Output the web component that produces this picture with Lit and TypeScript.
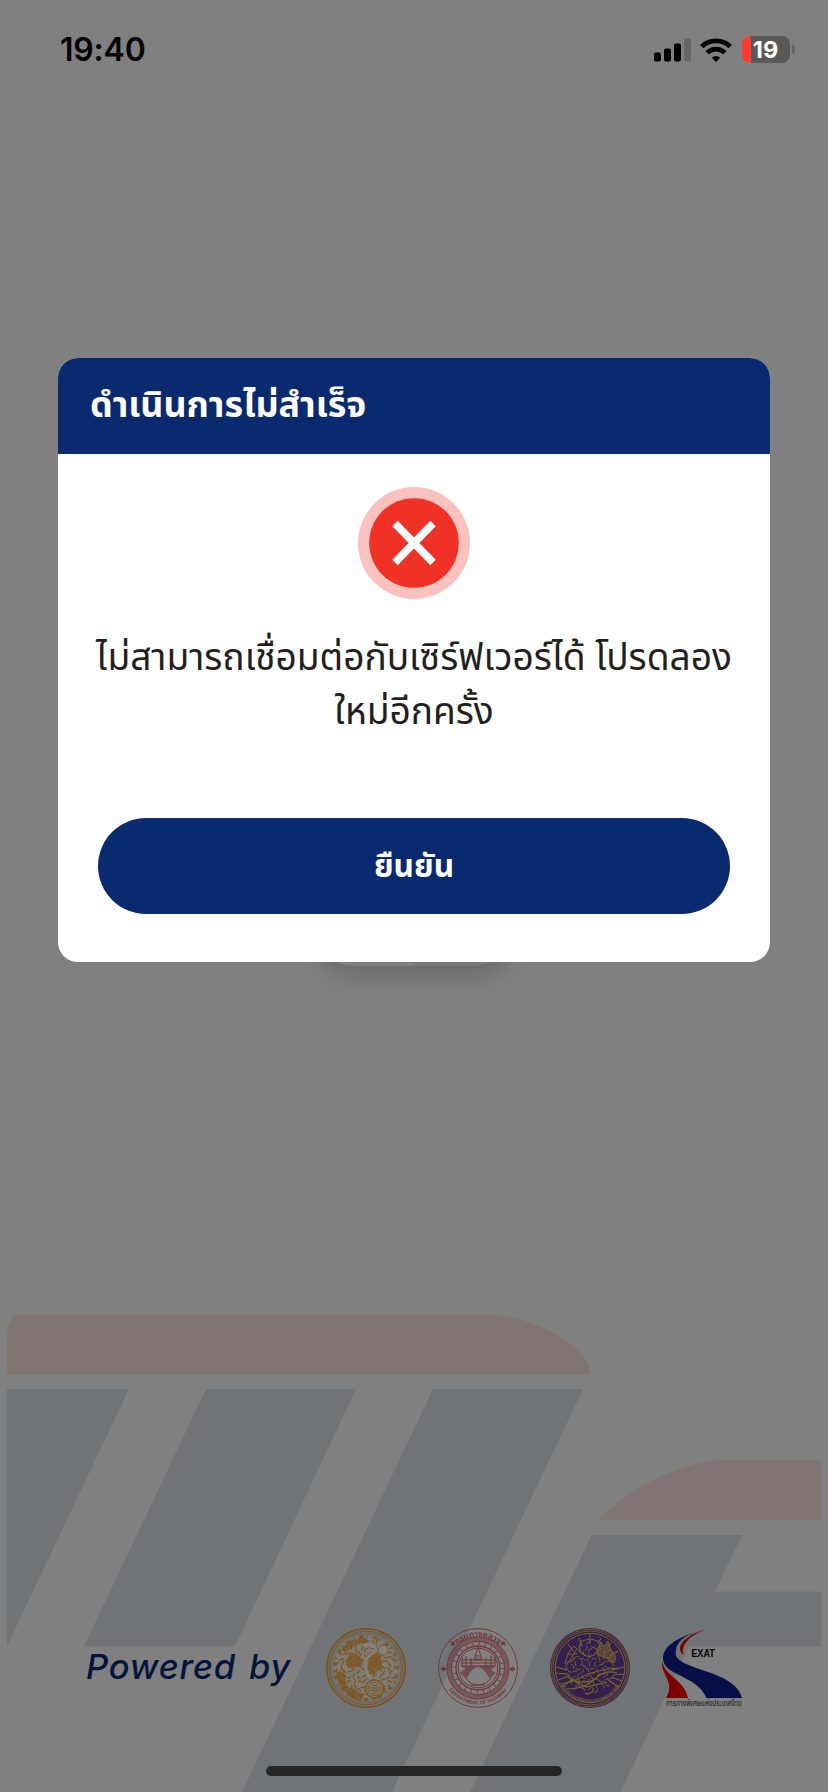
import { html, css, svg, LitElement } from 'lit'
import { customElement, property } from 'lit/decorators.js'

// small deterministic strokes filling the inside of an engraved seal
const engraving = (count: number, radius: number, size: number) => {
  let d = ''
  for (let i = 0; i < count; i++) {
    const a = i * 2.39996
    const r = radius * Math.sqrt((i + 0.5) / count)
    const x = 40 + r * Math.cos(a)
    const y = 40 + r * Math.sin(a)
    const t = a * 1.7
    const dx = size * Math.cos(t)
    const dy = size * Math.sin(t)
    d += `M${(x - dx).toFixed(1)} ${(y - dy).toFixed(1)}q${(dx - dy).toFixed(1)} ${(dy + dx).toFixed(1)} ${(2 * dx).toFixed(1)} ${(2 * dy).toFixed(1)}`
  }
  return d
}

@customElement('status-bar')
export class StatusBar extends LitElement {
  @property() time = '19:40'
  @property() level = '19'

  render() {
    return html`
      <span class="time">${this.time}</span>
      <span class="icons">
        <svg class="signal" width="37" height="24" viewBox="0 0 37 24">
          <rect x="0" y="14.5" width="7" height="9" rx="2" />
          <rect x="10" y="10.5" width="7" height="13" rx="2" />
          <rect x="20" y="5.5" width="7" height="18" rx="2" />
          <rect x="30" y="0.5" width="7" height="23" rx="2" fill="#666" />
        </svg>
        <svg class="wifi" width="32" height="24" viewBox="0 0 32 24" fill="none" stroke="#000" stroke-width="4.8">
          <path d="M1.8 8.6a20.4 20.4 0 0 1 28.4 0" />
          <path d="M7.2 14.7a12.6 12.6 0 0 1 17.6 0" />
          <path d="M16 24l-4.2-4.3a6.2 6.2 0 0 1 8.4 0z" fill="#000" stroke="none" />
        </svg>
        <span class="battery">${this.level}</span>
        <span class="nub"></span>
      </span>
    `
  }

  static styles = css`
    :host {
      display: flex;
      justify-content: space-between;
      align-items: center;
      height: 99px;
      padding: 0 33px 0 60px;
      box-sizing: border-box;
      font-family: Inter, sans-serif;
    }
    .time {
      font-size: 32px;
      font-weight: 600;
      color: #000;
      letter-spacing: -0.2px;
    }
    .icons {
      display: flex;
      align-items: center;
    }
    .wifi {
      margin: 0 10px 0 9px;
    }
    .battery {
      display: grid;
      place-items: center;
      width: 48px;
      height: 27px;
      padding-right: 1px;
      box-sizing: border-box;
      border-radius: 8px;
      background: linear-gradient(90deg, #ff3b30 9px, #595959 9px);
      color: #fff;
      font-size: 23.5px;
      font-weight: 700;
      line-height: 27px;
    }
    .nub {
      width: 3px;
      height: 9px;
      margin-left: 2px;
      border-radius: 0 4px 4px 0;
      background: #626262;
    }
  `
}

@customElement('agency-seals')
export class AgencySeals extends LitElement {
  rural() {
    return svg`
      <g fill="none" stroke="#7c5113">
        <circle cx="40" cy="40" r="39.2" stroke-width="1.6" />
        <circle cx="40" cy="40" r="36.8" stroke-width=".9" />
        <circle cx="40" cy="40" r="35" stroke-width=".5" />
        <circle cx="40" cy="40" r="32" fill="#7e7a73" stroke="none" />
        <path d=${engraving(110, 31, 2.3)} stroke-width="1.1" />
        <path d="M15 22q10-12 24-12l4 4q-14 0-22 9zM10 45q9-5 9 6t10 10l8 7-3 5Q14 66 10 45M22 28q6-6 12 1t-3 10q-8 2-11-3M42 26q8-7 12 2l2 11-9 8q-7-5-6-12" fill="#7c5113" stroke-width=".6" opacity=".65" />
        <path d="M38 17q14 0 11 6l-9 8v13l5 8" stroke="#85827b" stroke-width="3" />
        <circle cx="57" cy="22" r="4.8" fill="#85827b" stroke-width=".8" />
        <circle cx="48.5" cy="61" r="9" fill="#7e7a73" stroke-width="1.3" />
        <circle cx="48.5" cy="61" r="6.5" stroke-width=".8" />
        <path d="M43 60h11M44 62.5h9M46 57.5h5M46 65h5" stroke-width="1.1" />
        <circle cx="40" cy="40" r="31.5" stroke-width="3" stroke-dasharray="1.5 5 4 3" opacity=".7" />
      </g>`
  }

  highways() {
    return svg`
      <defs>
        <path id="top" d="M8.5 40a31.5 31.5 0 0 1 63 0" />
        <path id="bottom" d="M3.5 40a36.5 36.5 0 0 0 73 0" />
      </defs>
      <g fill="none" stroke="#703a3d">
        <circle cx="40" cy="40" r="39.4" stroke-width="1" />
        <circle cx="40" cy="40" r="29" stroke-width="4.8" opacity=".55" />
        <circle cx="40" cy="40" r="31" stroke-width=".9" />
        <circle cx="40" cy="40" r="26.5" stroke-width="1" />
        <circle cx="40" cy="40" r="24" stroke-width="3.5" stroke-dasharray=".9 5.38" />
        <circle cx="40" cy="40" r="22" stroke-width="1.3" />
        <circle cx="40" cy="40" r="19.8" stroke-width="1" />
        <path d="M24 29v9h33v-9M24 32h33M24 35h33M28 28v10M33 30v8M48 30v8M53 28v10" stroke-width="1.1" />
        <path d="M36 32l4-13 4 13zM37 28h6M36 31h8" stroke-width="1" />
        <path d="M24 38h33l-5 4 5 3-5 5-5-7q-7-9-14 0l-5 7-6-5 6-4z" fill="#703a3d" opacity=".75" stroke-width=".8" />
        <path d="M28 50q4 7 12 7t13-7M33 57h14" stroke-width="1" />
        <path d="M3 41h5M5.5 38.5v5M72 41h5M74.500 38.5v5M13 14l4 3M16.5 13.5l-3 4M63 17l4-3M64 13.5l3 4" stroke-width="1.9" />
      </g>
      <g fill="#703a3d" font-weight="700" text-anchor="middle">
        <text font-size="8" font-family="Noto Sans Thai, Open Sans, sans-serif"><textPath href="#top" startOffset="50%">กรมทางหลวง</textPath></text>
        <text font-size="5" font-family="Liberation Sans, sans-serif"><textPath href="#bottom" startOffset="50%">DEPARTMENT OF HIGHWAY</textPath></text>
      </g>`
  }

  transport() {
    return svg`
      <circle cx="40" cy="40" r="40" fill="#342050" />
      <g fill="none" stroke="#7c6328">
        <circle cx="40" cy="40" r="38.7" stroke-width=".8" />
        <circle cx="40" cy="40" r="37" stroke-width=".8" />
        <circle cx="40" cy="40" r="34.8" stroke-width="1" />
        <path d=${engraving(75, 25, 2.5)} stroke-width=".95" />
        <path d="M29 10l3 8M40 6v9M51 10l-3 6M18 16l5 7M61 15l-5 6M68 23l-8 5M6 39l11 3M5 45l12 1M8 52l11-4M12 59l11-8M74 39l-11 3M75 46l-12 1M72 53l-11-4M68 59l-11-8" stroke-width="1.1" />
        <path d="M15 36q2-12 9-18l3 3q-5 7-8 14M34 27q-9-6-2-14 9-4 17 1M34 27q7 4 12-2" stroke-width="1" />
        <path d="M46 24l5-10 3 5 4-6 3 9q7 5 3 13l-8-5q-5-1-10-6" fill="#7c6328" fill-opacity=".5" stroke-width="1" />
        <path d="M10 56q13-2 24-8t34-8M17 61q18 0 28-10t22-6M35 66q10-1 8-6M25 54l12 5 20-5M18 49q14 10 29 1" stroke-width="1.1" />
      </g>
      <defs><path id="ring" d="M5.500 40a34.500 34.500 0 0 0 69 0" /></defs>
      <text fill="#80662b" font-size="5.5" font-weight="600" text-anchor="middle" font-family="Noto Sans Thai, Open Sans, sans-serif"><textPath href="#ring" startOffset="50%">สำนักงานปลัดกระทรวงคมนาคม</textPath></text>`
  }

  exat() {
    return svg`
      <path d="M47 .7C25 5 1 15 1 30.3 1 48 35 47 44.5 70H80C74 42 13.7 42 13.7 25.5 13.7 12 25 5 47 .7" fill="#060f47" />
      <path d="M42.5 1.7C25 7 12 17.5 21 26.7 19.5 15 28 8 42.5 1.7M.3 33.5C-2 46 14 54 4 70H26C22 51 3 49 .3 33.5" fill="#800000" />
      <text x="29.3" y="29.4" font-size="11.5" font-weight="700" font-family="Liberation Sans, sans-serif" textLength="23.5" lengthAdjust="spacingAndGlyphs">EXAT</text>
      <text x="4" y="78.4" font-size="8" font-family="Noto Sans Thai, Open Sans, sans-serif" textLength="76" lengthAdjust="spacingAndGlyphs" fill="#181818">การทางพิเศษแห่งประเทศไทย</text>`
  }

  render() {
    return html`
      <span class="label">Powered by</span>
      <div class="seals">
        <svg viewBox="0 0 80 80">${this.rural()}</svg>
        <svg viewBox="0 0 80 80">${this.highways()}</svg>
        <svg viewBox="0 0 80 80">${this.transport()}</svg>
        <svg viewBox="0 0 80 80">${this.exat()}</svg>
      </div>
    `
  }

  static styles = css`
    :host {
      display: flex;
      align-items: center;
      justify-content: space-between;
      padding: 0 86px 0 86px;
    }
    .label {
      padding-bottom: 3px;
      color: #04153d;
      font: italic 500 34.5px/44px Inter, sans-serif;
      letter-spacing: 0.8px;
      word-spacing: 3px;
      white-space: nowrap;
    }
    .seals {
      display: flex;
      gap: 32px;
    }
    svg {
      display: block;
      width: 80px;
      height: 80px;
      overflow: visible;
    }
  `
}

@customElement('error-dialog')
export class ErrorDialog extends LitElement {
  @property() heading = 'ดำเนินการไม่สำเร็จ'
  @property() action = 'ยืนยัน'
  @property({ attribute: false }) lines = ['ไม่สามารถเชื่อมต่อกับเซิร์ฟเวอร์ได้ โปรดลอง', 'ใหม่อีกครั้ง']

  render() {
    return html`
      <header><h1>${this.heading}</h1></header>
      <div class="content">
        <svg width="112" height="112" viewBox="0 0 112 112">
          <circle cx="56" cy="56" r="56" fill="#fac2bf" />
          <circle cx="56" cy="56" r="44.8" fill="#f03126" />
          <path d="M37 36.5l38 39M75 36.5l-38 39" stroke="#fff" stroke-width="7.6" />
        </svg>
        <div class="message">${this.lines.map((line) => html`<p>${line}</p>`)}</div>
        <button>${this.action}</button>
      </div>
    `
  }

  static styles = css`
    :host {
      display: block;
      overflow: hidden;
      border-radius: 20px;
      background: #fff;
      font-family: 'Noto Sans Thai', 'Open Sans', sans-serif;
    }
    header {
      display: flex;
      align-items: center;
      height: 96px;
      padding: 0 32px;
      background: #0a2a70;
    }
    h1 {
      margin: 0;
      color: #fff;
      font-size: 35.8px;
      font-weight: 700;
    }
    .content {
      display: flex;
      flex-direction: column;
      align-items: center;
      padding: 33px 40px 48px;
    }
    .message {
      margin: 33px 0 78px;
    }
    p {
      margin: 0;
      color: #231f20;
      font-size: 37.1px;
      line-height: 54px;
      text-align: center;
      white-space: nowrap;
    }
    button {
      width: 100%;
      height: 96px;
      padding: 2px 0 0;
      border: 0;
      border-radius: 48px;
      background: #0a2a70;
      color: #fff;
      font-family: inherit;
      font-size: 31.6px;
      font-weight: 700;
    }
  `
}

@customElement('app-root')
export class AppRoot extends LitElement {
  render() {
    return html`
      <svg class="backdrop" viewBox="0 0 828 1792">
        <g fill="#807573">
          <path d="M7 1330l7-16h470c38 0 106 27 106 60.5H7z" />
          <path d="M599 1520.3c27-31 83-60.3 128-60.3h94v60.3z" />
        </g>
        <path fill="#707477" d="M7 1389h122L7 1646zM206 1389h150l-121 257.3H84zM433 1389h150L392 1792H242zM591.5 1535H742l-27 56.5h106v55H689L620.5 1792H470z" />
      </svg>
      <div class="tile"></div>
      <status-bar></status-bar>
      <main><error-dialog></error-dialog></main>
      <agency-seals></agency-seals>
      <div class="home"></div>
    `
  }

  static styles = css`
    :host {
      position: relative;
      display: flex;
      flex-direction: column;
      height: 1792px;
      overflow: hidden;
      background: #808080;
    }
    .backdrop {
      position: absolute;
      inset: 0;
    }
    .tile {
      position: absolute;
      left: 314px;
      top: 766px;
      width: 200px;
      height: 200px;
      border-radius: 40px;
      background: linear-gradient(90deg, #808080 48%, #7a7a7a 49%);
      box-shadow: 0 8px 24px rgba(0, 0, 0, 0.2);
    }
    status-bar,
    main,
    agency-seals,
    .home {
      position: relative;
    }
    main {
      flex: 1;
      padding: 259px 58px 0;
    }
    .home {
      width: 296px;
      height: 10px;
      margin: 58px auto 16px;
      border-radius: 5px;
      background: #262626;
    }
  `
}
